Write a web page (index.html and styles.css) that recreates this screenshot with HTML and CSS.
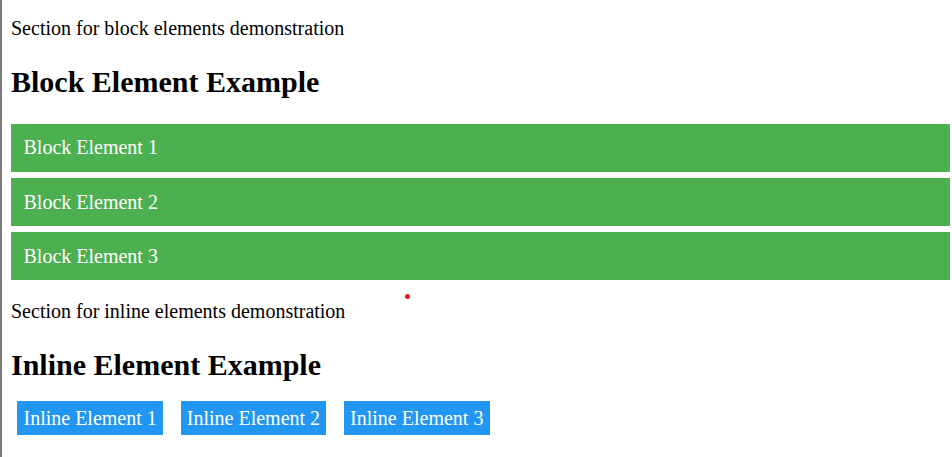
FILE: index.html
```html
<!DOCTYPE html>
<html lang="en">
<head>
    <meta charset="UTF-8">
    <meta name="viewport" content="width=device-width, initial-scale=1.0">
    <title>Block and Inline Elements</title>
    <link rel="stylesheet" href="styles.css">
</head>
<body>

    <div class="page">
        <!-- Block elements -->
        <section class="demo">
            <p class="intro">Section for block elements demonstration</p>
            <h2>Block Element Example</h2>
            <div class="block">Block Element 1</div>
            <div class="block">Block Element 2</div>
            <div class="block">Block Element 3</div>
        </section>

        <!-- Inline elements -->
        <section class="demo">
            <p class="intro">Section for inline elements demonstration</p>
            <h2>Inline Element Example</h2>
            <div class="inline-row">
                <span class="inline">Inline Element 1</span>
                <span class="inline">Inline Element 2</span>
                <span class="inline">Inline Element 3</span>
            </div>
        </section>

        <span class="dot"></span>
    </div>

</body>
</html>
```

FILE: styles.css
```css
/* General */
body {
    margin: 0;
    font-family: "Liberation Serif", "Times New Roman", serif;
    font-size: 20px;
    color: #000;
    background-color: #fff;
}

.page {
    position: relative;
    display: flow-root;
    min-height: 457px;
    box-sizing: border-box;
    border-left: 2px solid #7a7a7a;
    padding: 0 2px 0 9px;
}

.intro {
    margin: 20px 0;
}

.demo:first-child .intro {
    margin-top: 17px;
}

h2 {
    font-size: 30px;
    font-weight: bold;
    margin: 24.9px 0;
}

/* Block elements */
.block {
    background-color: #4caf50;
    color: #fff;
    padding: 12.5px;
    margin: 6.25px 0;
}

/* Inline elements */
.inline {
    background-color: #2196f3;
    color: #fff;
    padding: 6.25px;
    margin: 0 6.25px;
}

/* little red marker */
.dot {
    position: absolute;
    left: 403px;
    top: 294px;
    width: 5px;
    height: 5px;
    border-radius: 50%;
    background-color: #e8141c;
}
```
